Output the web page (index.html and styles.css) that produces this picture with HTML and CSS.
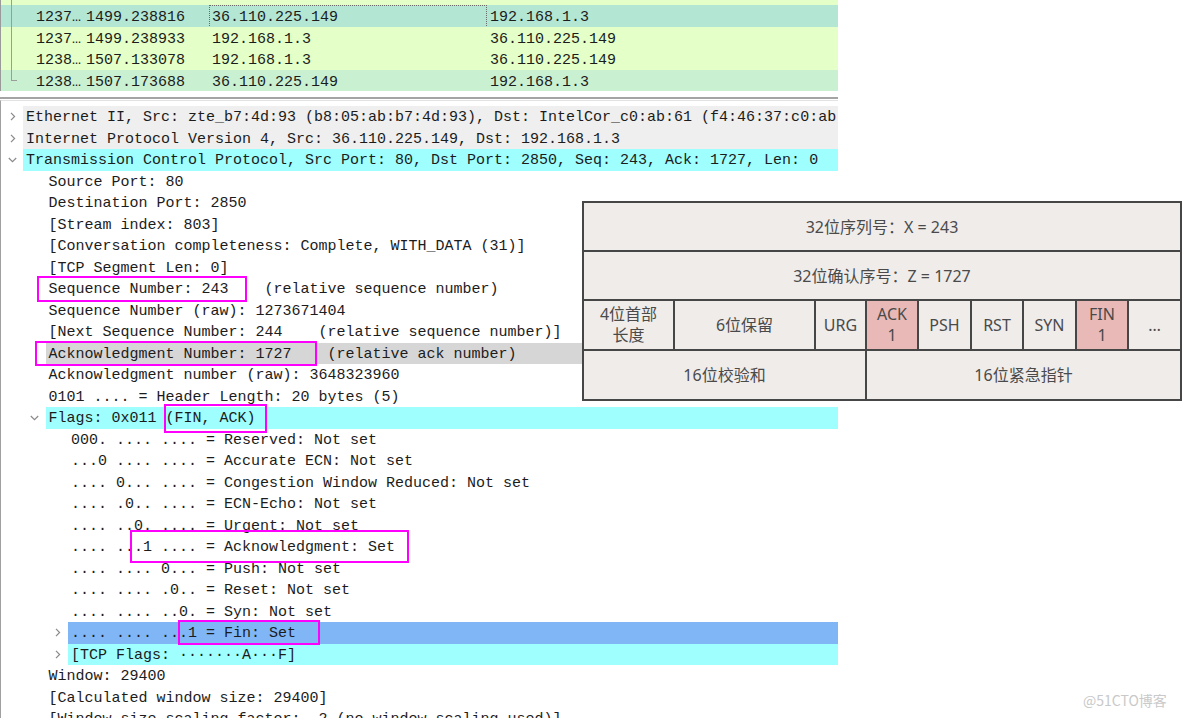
FILE: index.html
```html
<!DOCTYPE html>
<html lang="zh">
<head>
<meta charset="utf-8">
<title>Wireshark TCP FIN</title>
<link rel="stylesheet" href="styles.css">
</head>
<body>
<div class="page">
  <div class="ws">
    <div class="plist">
      <div class="prow prow-top"><span class="c0"><i class="tl"></i></span></div>
      <div class="prow r-sel">
        <span class="c0"><i class="tl"></i></span><span class="cno">1237…</span><span class="ctime">1499.238816</span><span class="csrc focus">36.110.225.149</span><span class="cdst">192.168.1.3</span>
      </div>
      <div class="prow r-http">
        <span class="c0"><i class="tl"></i></span><span class="cno">1237…</span><span class="ctime">1499.238933</span><span class="csrc">192.168.1.3</span><span class="cdst">36.110.225.149</span>
      </div>
      <div class="prow r-http">
        <span class="c0"><i class="tl"></i></span><span class="cno">1238…</span><span class="ctime">1507.133078</span><span class="csrc">192.168.1.3</span><span class="cdst">36.110.225.149</span>
      </div>
      <div class="prow r-tcp">
        <span class="c0"><i class="tl tl-end"></i></span><span class="cno">1238…</span><span class="ctime">1507.173688</span><span class="csrc">36.110.225.149</span><span class="cdst">192.168.1.3</span>
      </div>
    </div>
    <div class="split"></div>
    <div class="tree">
      <div class="row"><span class="tw"><svg width="9" height="9" viewBox="0 0 9 9"><path class="chev" d="M3 0.8 L6.6 4.5 L3 8.2"/></svg></span><span class="lbl bg-hdr">Ethernet II, Src: zte_b7:4d:93 (b8:05:ab:b7:4d:93), Dst: IntelCor_c0:ab:61 (f4:46:37:c0:ab:61)</span></div>
      <div class="row"><span class="tw"><svg width="9" height="9" viewBox="0 0 9 9"><path class="chev" d="M3 0.8 L6.6 4.5 L3 8.2"/></svg></span><span class="lbl bg-hdr">Internet Protocol Version 4, Src: 36.110.225.149, Dst: 192.168.1.3</span></div>
      <div class="row"><span class="tw"><svg width="9" height="9" viewBox="0 0 9 9"><path class="chev" d="M0.8 3 L4.5 6.6 L8.2 3"/></svg></span><span class="lbl bg-cyan">Transmission Control Protocol, Src Port: 80, Dst Port: 2850, Seq: 243, Ack: 1727, Len: 0</span></div>
      <div class="row l1"><span class="tw"></span><span class="lbl">Source Port: 80</span></div>
      <div class="row l1"><span class="tw"></span><span class="lbl">Destination Port: 2850</span></div>
      <div class="row l1"><span class="tw"></span><span class="lbl">[Stream index: 803]</span></div>
      <div class="row l1"><span class="tw"></span><span class="lbl">[Conversation completeness: Complete, WITH_DATA (31)]</span></div>
      <div class="row l1"><span class="tw"></span><span class="lbl">[TCP Segment Len: 0]</span></div>
      <div class="row l1"><span class="tw"></span><span class="lbl">Sequence Number: 243    (relative sequence number)</span></div>
      <div class="row l1"><span class="tw"></span><span class="lbl">Sequence Number (raw): 1273671404</span></div>
      <div class="row l1"><span class="tw"></span><span class="lbl">[Next Sequence Number: 244    (relative sequence number)]</span></div>
      <div class="row l1"><span class="tw"></span><span class="lbl bg-gray">Acknowledgment Number: 1727    (relative ack number)</span></div>
      <div class="row l1"><span class="tw"></span><span class="lbl">Acknowledgment number (raw): 3648323960</span></div>
      <div class="row l1"><span class="tw"></span><span class="lbl">0101 .... = Header Length: 20 bytes (5)</span></div>
      <div class="row l1"><span class="tw"><svg width="9" height="9" viewBox="0 0 9 9"><path class="chev" d="M0.8 3 L4.5 6.6 L8.2 3"/></svg></span><span class="lbl bg-cyan">Flags: 0x011 (FIN, ACK)</span></div>
      <div class="row l2"><span class="tw"></span><span class="lbl">000. .... .... = Reserved: Not set</span></div>
      <div class="row l2"><span class="tw"></span><span class="lbl">...0 .... .... = Accurate ECN: Not set</span></div>
      <div class="row l2"><span class="tw"></span><span class="lbl">.... 0... .... = Congestion Window Reduced: Not set</span></div>
      <div class="row l2"><span class="tw"></span><span class="lbl">.... .0.. .... = ECN-Echo: Not set</span></div>
      <div class="row l2"><span class="tw"></span><span class="lbl">.... ..0. .... = Urgent: Not set</span></div>
      <div class="row l2"><span class="tw"></span><span class="lbl">.... ...1 .... = Acknowledgment: Set</span></div>
      <div class="row l2"><span class="tw"></span><span class="lbl">.... .... 0... = Push: Not set</span></div>
      <div class="row l2"><span class="tw"></span><span class="lbl">.... .... .0.. = Reset: Not set</span></div>
      <div class="row l2"><span class="tw"></span><span class="lbl">.... .... ..0. = Syn: Not set</span></div>
      <div class="row l2"><span class="tw"><svg width="9" height="9" viewBox="0 0 9 9"><path class="chev" d="M3 0.8 L6.6 4.5 L3 8.2"/></svg></span><span class="lbl bg-blue">.... .... ...1 = Fin: Set</span></div>
      <div class="row l2"><span class="tw"><svg width="9" height="9" viewBox="0 0 9 9"><path class="chev" d="M3 0.8 L6.6 4.5 L3 8.2"/></svg></span><span class="lbl bg-cyan">[TCP Flags: ·······A···F]</span></div>
      <div class="row l1"><span class="tw"></span><span class="lbl">Window: 29400</span></div>
      <div class="row l1"><span class="tw"></span><span class="lbl">[Calculated window size: 29400]</span></div>
      <div class="row l1"><span class="tw"></span><span class="lbl">[Window size scaling factor: -2 (no window scaling used)]</span></div>
    </div>
  </div>

  <div class="mark mk-seq"></div>
  <div class="mark mk-ack"></div>
  <div class="mark mk-flags"></div>
  <div class="mark mk-ackset"></div>
  <div class="mark mk-fin"></div>

  <div class="hdr">
    <div class="cell span9">32位序列号：X = 243</div>
    <div class="cell span9">32位确认序号：Z = 1727</div>
    <div class="cell two">4位首部<br>长度</div>
    <div class="cell">6位保留</div>
    <div class="cell">URG</div>
    <div class="cell two pink">ACK<br>1</div>
    <div class="cell">PSH</div>
    <div class="cell">RST</div>
    <div class="cell">SYN</div>
    <div class="cell two pink">FIN<br>1</div>
    <div class="cell">…</div>
    <div class="cell span4">16位校验和</div>
    <div class="cell span6">16位紧急指针</div>
  </div>

  <div class="wm">@51CTO博客</div>
</div>
</body>
</html>
```
FILE: styles.css
```css
html, body {
  margin: 0;
  padding: 0;
  background: #ffffff;
}
.page {
  position: relative;
  width: 1184px;
  height: 718px;
  overflow: hidden;
  font-family: "Liberation Mono", "DejaVu Sans Mono", monospace;
  font-size: 15px;
  color: #1c1c1c;
}
.ws {
  width: 838px;
}

/* packet list */
.plist {
  border-left: 1px solid #9a9a9a;
  height: 91px;
  overflow: hidden;
}
.prow {
  display: grid;
  grid-template-columns: 35px 50px 123px 278px 1fr;
  height: 21.5px;
  line-height: 25px;
  overflow: hidden;
  white-space: pre;
}
.prow-top {
  height: 5px;
  background: #e4ffc7;
}
.r-sel { background: #b3e6d3; }
.r-http { background: #e4ffc7; }
.r-tcp { background: #caf0d2; }
.c0 { position: relative; }
.tl {
  display: block;
  margin-left: 10px;
  width: 6px;
  height: 100%;
  border-left: 1px solid #9c9c9c;
  box-sizing: border-box;
}
.tl-end {
  height: 11px;
  border-bottom: 1px solid #9c9c9c;
}
.csrc { padding-left: 3px; }
.cdst { padding-left: 3px; }
.focus {
  outline: 1px dotted #6a6a6a;
  outline-offset: -1px;
}

/* splitter */
.split {
  height: 9px;
  box-sizing: border-box;
  border-top: 6px solid #ffffff;
  border-bottom: 1px solid #ffffff;
  background: #a4a4a4;
}

/* detail tree */
.tree {
  border-left: 1px solid #a0a0a0;
  border-top: 1px solid #e2e2e2;
  padding-top: 5px;
}
.row {
  display: flex;
  height: 21.5px;
  line-height: 24px;
  overflow: hidden;
  white-space: pre;
}
.l1 { padding-left: 22.5px; }
.l2 { padding-left: 45px; }
.tw {
  flex: none;
  width: 22px;
  display: flex;
  align-items: center;
  justify-content: center;
}
.chev {
  fill: none;
  stroke: #8a8a8a;
  stroke-width: 1.2;
}
.lbl {
  flex: 1;
  min-width: 0;
  padding-left: 3px;
  overflow: hidden;
}
.bg-hdr { background: #efefef; }
.bg-cyan { background: #9fffff; }
.bg-gray { background: #d6d6d6; }
.bg-blue { background: #80b6f6; }

/* magenta annotation boxes */
.mark {
  position: absolute;
  border: 2px solid #ff00ff;
  box-sizing: border-box;
}
.mk-seq { left: 37px; top: 276px; width: 210px; height: 26px; }
.mk-ack { left: 35px; top: 341px; width: 282px; height: 25px; }
.mk-flags { left: 164px; top: 404px; width: 103px; height: 29px; }
.mk-ackset { left: 130px; top: 530px; width: 279px; height: 33px; }
.mk-fin { left: 178px; top: 620px; width: 142px; height: 25px; }

/* TCP header diagram */
.hdr {
  position: absolute;
  left: 582px;
  top: 201px;
  display: grid;
  grid-template-columns: 89px 139px 49px 50px 51px 50px 51px 50px 51px;
  grid-template-rows: 47px 47px 48px 48px;
  gap: 2px;
  padding: 2px;
  background: #464646;
  font-family: "Noto Sans", "Noto Sans CJK SC", sans-serif;
  font-size: 16px;
  color: #4a4a4a;
}
.cell {
  background: #efecea;
  display: flex;
  align-items: center;
  justify-content: center;
  text-align: center;
  line-height: 22px;
}
.two { line-height: 21px; }
.pink { background: #e9b9b7; }
.span9 { grid-column: span 9; }
.span4 { grid-column: span 3; }
.span6 { grid-column: span 6; }

.wm {
  position: absolute;
  left: 1083px;
  top: 690px;
  font-family: "Noto Sans CJK SC", "Noto Sans", sans-serif;
  font-size: 14px;
  color: #c9c9c9;
}
```
